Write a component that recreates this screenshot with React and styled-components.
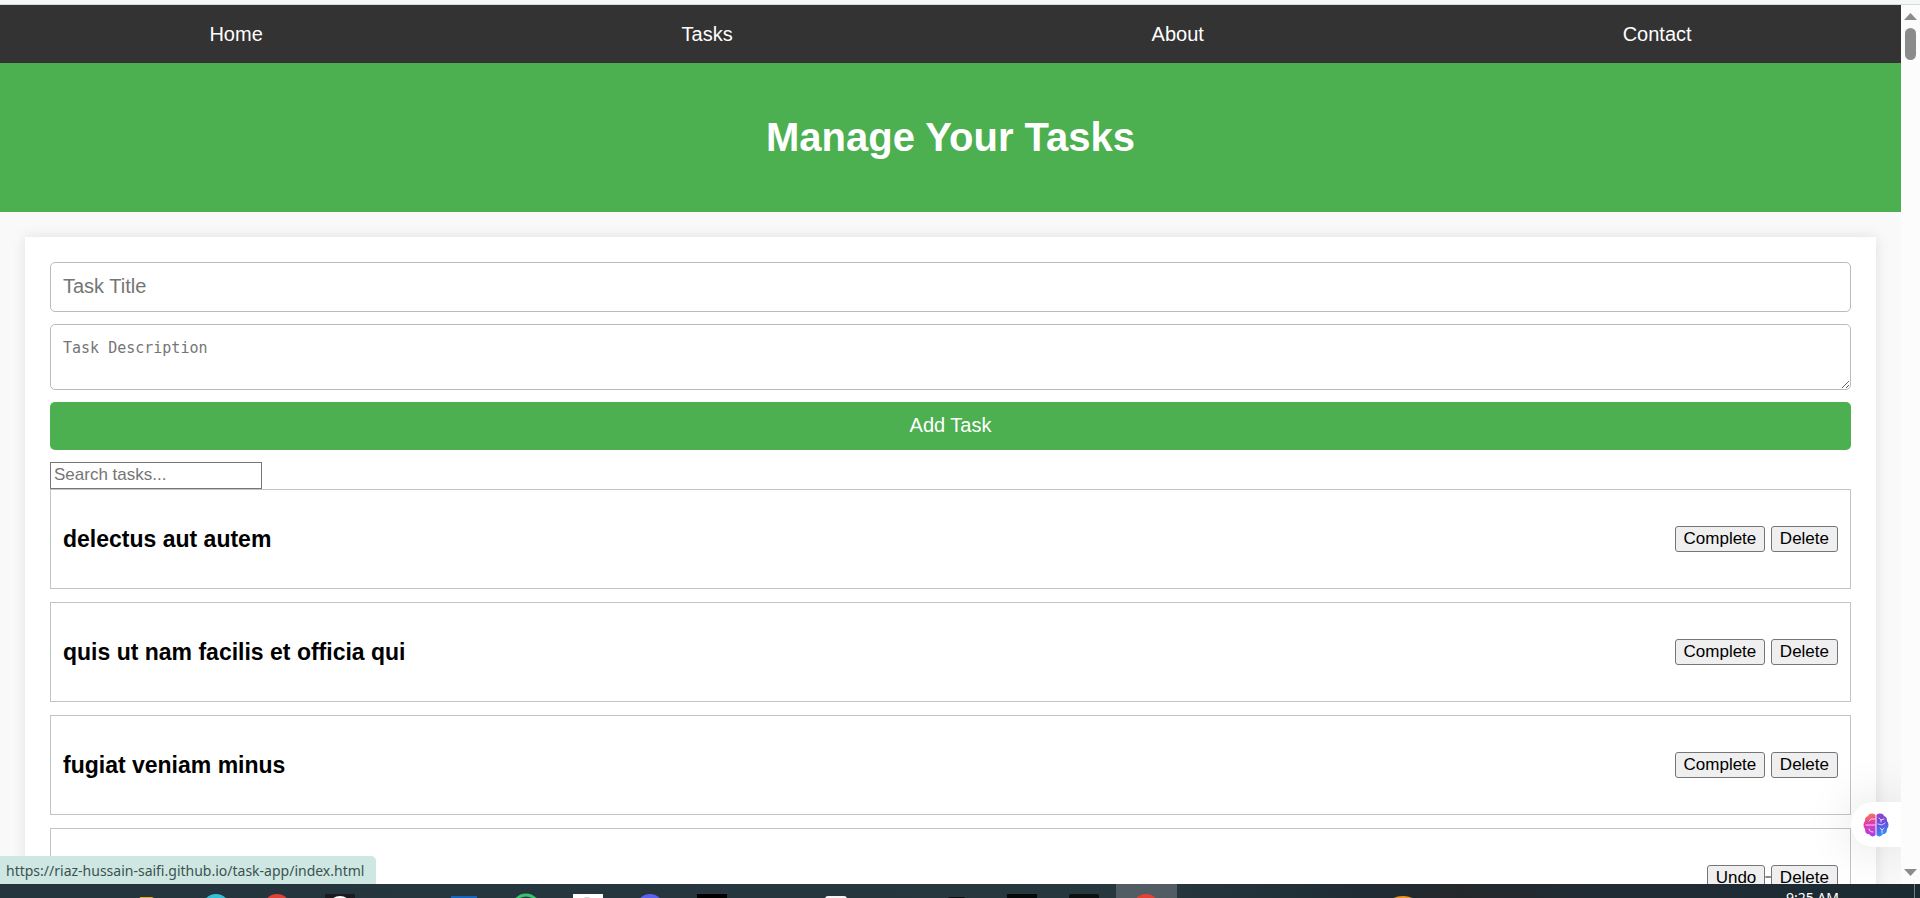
import React from 'react';
import styled, { createGlobalStyle } from 'styled-components';

const GlobalStyle = createGlobalStyle`
  *, *::before, *::after { box-sizing: border-box; }
  html, body { margin: 0; }
  body { font: 20px/23px Arial, "Liberation Sans", sans-serif; color: #000; }
`;

const Desktop = styled.div`
  display: grid;
  grid-template-rows: 5px minmax(0, 1fr) 14px;
  height: 100vh;
  overflow: hidden;
`;

const BrowserEdge = styled.div`
  background: #f4f9f8;
  border-bottom: 1px solid #d3dedb;
`;

const Viewport = styled.div`
  position: relative;
  display: grid;
  grid-template-columns: minmax(0, 1fr) 19px;
  overflow: hidden;
`;

const Page = styled.div`
  position: relative;
  overflow: hidden;
  background: #f9f9f9;
`;

const Nav = styled.nav`
  display: flex;
  justify-content: space-around;
  align-items: center;
  height: 58px;
  background: #333;
`;

const NavLink = styled.a`
  color: #fff;
  text-decoration: none;
`;

const Header = styled.header`
  display: flex;
  justify-content: center;
  align-items: center;
  height: 149px;
  padding-bottom: 2px;
  background: #4caf50;
  color: #fff;
`;

const Title = styled.h1`
  margin: 0;
  font-size: 40px;
  line-height: 46px;
`;

const Card = styled.main`
  margin: 25px;
  padding: 25px;
  background: #fff;
  box-shadow: 0 0 13px rgba(0, 0, 0, 0.1);
`;

const Form = styled.form`
  display: flex;
  flex-direction: column;
  gap: 12px;
  margin-bottom: 12px;
`;

const TitleInput = styled.input`
  height: 50px;
  padding: 0 12px 2px;
  border: 1px solid #bbb;
  border-radius: 5px;
  font: inherit;
  &::placeholder { color: #757575; }
`;

const DescriptionInput = styled.textarea`
  height: 66px;
  padding: 14px 12px 12px;
  border: 1px solid #bbb;
  border-radius: 5px;
  font: 15px/19px Consolas, "DejaVu Sans Mono", monospace;
  resize: vertical;
  &::placeholder { color: #757575; }
`;

const SubmitButton = styled.button`
  height: 48px;
  padding: 0 0 2px;
  border: 0;
  border-radius: 5px;
  background: #4caf50;
  color: #fff;
  font: inherit;
`;

const SearchInput = styled.input`
  display: block;
  width: 212px;
  height: 27px;
  padding: 0 3px 2px;
  border: 1px solid #767676;
  border-radius: 0;
  font-family: inherit;
  font-size: 17px;
  &::placeholder { color: #757575; }
`;

const TaskList = styled.ul`
  display: flex;
  flex-direction: column;
  gap: 13px;
  margin: 0;
  padding: 0;
  list-style: none;
`;

const TaskItem = styled.li`
  display: flex;
  justify-content: space-between;
  align-items: center;
  min-height: 100px;
  padding: 12px;
  border: 1px solid #c4c4c4;
  color: ${({ $done }) => ($done ? '#888' : '#000')};
  text-decoration: ${({ $done }) => ($done ? 'line-through' : 'none')};
`;

const TaskTitle = styled.h3`
  margin: 0;
  font-size: 23px;
  line-height: 27px;
`;

const TaskActions = styled.div`
  margin-left: auto;
`;

const TaskButton = styled.button`
  height: 26px;
  padding: 0 8px;
  border: 1px solid #767676;
  border-radius: 3px;
  background: #efefef;
  color: #000;
  font-family: inherit;
  font-size: 17px;
  line-height: 20px;
`;

const AssistantTab = styled.button`
  position: absolute;
  right: 0;
  bottom: 37px;
  display: flex;
  align-items: center;
  justify-content: center;
  width: 50px;
  height: 45px;
  padding: 0;
  border: 0;
  border-radius: 23px 0 0 23px;
  background: #fff;
  box-shadow: 0 0 50px rgba(0, 0, 0, 0.14);
`;

const StatusBubble = styled.div`
  position: absolute;
  left: 0;
  bottom: 0;
  height: 28px;
  padding: 0 12px 0 6px;
  border-radius: 0 5px 0 0;
  background: #cfe7e2;
  color: #3c5250;
  font: 14px/29px "Segoe UI", "Noto Sans", sans-serif;
  white-space: nowrap;
`;

const ScrollTrack = styled.div`
  display: flex;
  flex-direction: column;
  align-items: center;
  justify-content: space-between;
  padding: 8px 0;
  background: #fcfcfc;
`;

const ScrollTop = styled.div`
  display: flex;
  flex-direction: column;
  align-items: center;
  gap: 8px;
`;

const ScrollThumb = styled.div`
  width: 11px;
  height: 32px;
  border-radius: 6px;
  background: #8b8b8b;
`;

const Taskbar = styled.footer`
  display: flex;
  justify-content: space-between;
  overflow: hidden;
  background: linear-gradient(90deg, #25353e 0%, #27373e 60%, #1f2c35 71%, #24282b 76%, #1f2c35 84%, #1c2a32 100%);
`;

const TaskbarIcons = styled.svg`
  display: block;
  flex: none;
`;

const Tray = styled.div`
  display: flex;
  gap: 75px;
  padding-right: 5px;
  color: #fff;
  font: 14px/20px "Segoe UI", "Noto Sans", sans-serif;
`;

const Clock = styled.time`
  padding-top: 4px;
`;

const ShowDesktop = styled.span`
  height: 14px;
  border-left: 1px solid #718087;
`;

const links = ['Home', 'Tasks', 'About', 'Contact'];

const tasks = [
  { id: 1, title: 'delectus aut autem', done: false },
  { id: 2, title: 'quis ut nam facilis et officia qui', done: false },
  { id: 3, title: 'fugiat veniam minus', done: false },
  { id: 4, title: '', done: true },
];

function Arrow({ down }) {
  return (
    <svg width="13" height="7" viewBox="0 0 13 7" aria-hidden="true">
      <path d={down ? 'M0 0H13L6.5 7Z' : 'M0 7H13L6.5 0Z'} fill="#8b8b8b" />
    </svg>
  );
}

function BrainIcon() {
  return (
    <svg width="26" height="24" viewBox="0 0 26 24" fill="none" aria-hidden="true">
      <defs>
        <linearGradient id="brain-left" x1="3" y1="1" x2="10" y2="23" gradientUnits="userSpaceOnUse">
          <stop offset="0" stopColor="#f98a3c" />
          <stop offset=".35" stopColor="#e83fa4" />
          <stop offset="1" stopColor="#a63df0" />
        </linearGradient>
        <linearGradient id="brain-right" x1="15" y1="1" x2="23" y2="22" gradientUnits="userSpaceOnUse">
          <stop offset="0" stopColor="#9a3fd0" />
          <stop offset=".5" stopColor="#6450e0" />
          <stop offset="1" stopColor="#2a9bff" />
        </linearGradient>
      </defs>
      <path d="M12.5 2C10 0 6 0 5 3C2 4 2 6 2 8C0 10 0 14 2 16C2 19 3 21 6 21C8 24 11 24 12.5 22Z" fill="url(#brain-left)" />
      <path d="M13.5 2C16 0 20 0 21 3C24 4 24 6 24 8C26 10 26 14 24 16C24 19 23 21 20 21C18 24 15 24 13.5 22Z" fill="url(#brain-right)" />
      <g stroke="#fff" strokeWidth=".9" strokeLinecap="round" strokeOpacity=".85">
        <path d="M12 6H8L6 8M3 12H12M6 16C6 18 8 19 10 19" />
        <path d="M16 5L18 7L21 6M18 7V9M15 11L19 12L22 10M17 15L19 17L21 15M19 17V20" />
      </g>
    </svg>
  );
}

export default function App() {
  return (
    <>
      <GlobalStyle />
      <Desktop>
        <BrowserEdge />
        <Viewport>
          <Page>
            <Nav>
              {links.map((label) => (
                <NavLink key={label} href={`#${label.toLowerCase()}`}>{label}</NavLink>
              ))}
            </Nav>
            <Header>
              <Title>Manage Your Tasks</Title>
            </Header>
            <Card>
              <Form onSubmit={(event) => event.preventDefault()}>
                <TitleInput type="text" placeholder="Task Title" aria-label="Task Title" />
                <DescriptionInput placeholder="Task Description" aria-label="Task Description" />
                <SubmitButton type="submit">Add Task</SubmitButton>
              </Form>
              <SearchInput type="text" placeholder="Search tasks..." aria-label="Search tasks" />
              <TaskList>
                {tasks.map((task) => (
                  <TaskItem key={task.id} $done={task.done}>
                    {task.title && <TaskTitle>{task.title}</TaskTitle>}
                    <TaskActions>
                      <TaskButton type="button">{task.done ? 'Undo' : 'Complete'}</TaskButton>{' '}
                      <TaskButton type="button">Delete</TaskButton>
                    </TaskActions>
                  </TaskItem>
                ))}
              </TaskList>
            </Card>
            <AssistantTab type="button" aria-label="Open assistant">
              <BrainIcon />
            </AssistantTab>
            <StatusBubble>https://riaz-hussain-saifi.github.io/task-app/index.html</StatusBubble>
          </Page>
          <ScrollTrack>
            <ScrollTop>
              <Arrow />
              <ScrollThumb />
            </ScrollTop>
            <Arrow down />
          </ScrollTrack>
        </Viewport>
        <Taskbar>
          <TaskbarIcons width="1440" height="14" viewBox="0 0 1440 14" aria-hidden="true">
            <path d="M140 14V13H152L154 14Z" fill="#e8ab1c" />
            <circle cx="216" cy="24" r="14" fill="#35c0d8" />
            <circle cx="277" cy="24" r="14" fill="#e04237" />
            <path d="M325 10H355V14H325Z" fill="#1d1b20" />
            <circle cx="340" cy="24" r="12" fill="#fff" />
            <path d="M451 12H477V14H451Z" fill="#1565c0" />
            <circle cx="526" cy="24" r="13" fill="none" stroke="#35c46b" strokeWidth="3" />
            <path d="M573 10H603V14H573Z" fill="#fff" />
            <circle cx="587" cy="19" r="6" fill="#ccc" />
            <circle cx="650" cy="24" r="14" fill="#5b60ee" />
            <path d="M697 10H727V14H697Z" fill="#000" />
            <rect x="825" y="12" width="22" height="6" rx="3" fill="#f4f4f4" />
            <rect x="947" y="13" width="19" height="6" rx="3" fill="#0c0f10" />
            <path d="M1007 10H1037V14H1007Z" fill="#05090a" />
            <rect x="1069" y="10" width="30" height="8" rx="2" fill="#0c1011" />
            <path d="M1116 0H1177V14H1116Z" fill="#525c63" />
            <circle cx="1146" cy="24" r="14" fill="#e44234" />
            <ellipse cx="1403" cy="21" rx="15" ry="9" fill="#f0951d" />
          </TaskbarIcons>
          <Tray>
            <Clock>9:25 AM</Clock>
            <ShowDesktop />
          </Tray>
        </Taskbar>
      </Desktop>
    </>
  );
}
